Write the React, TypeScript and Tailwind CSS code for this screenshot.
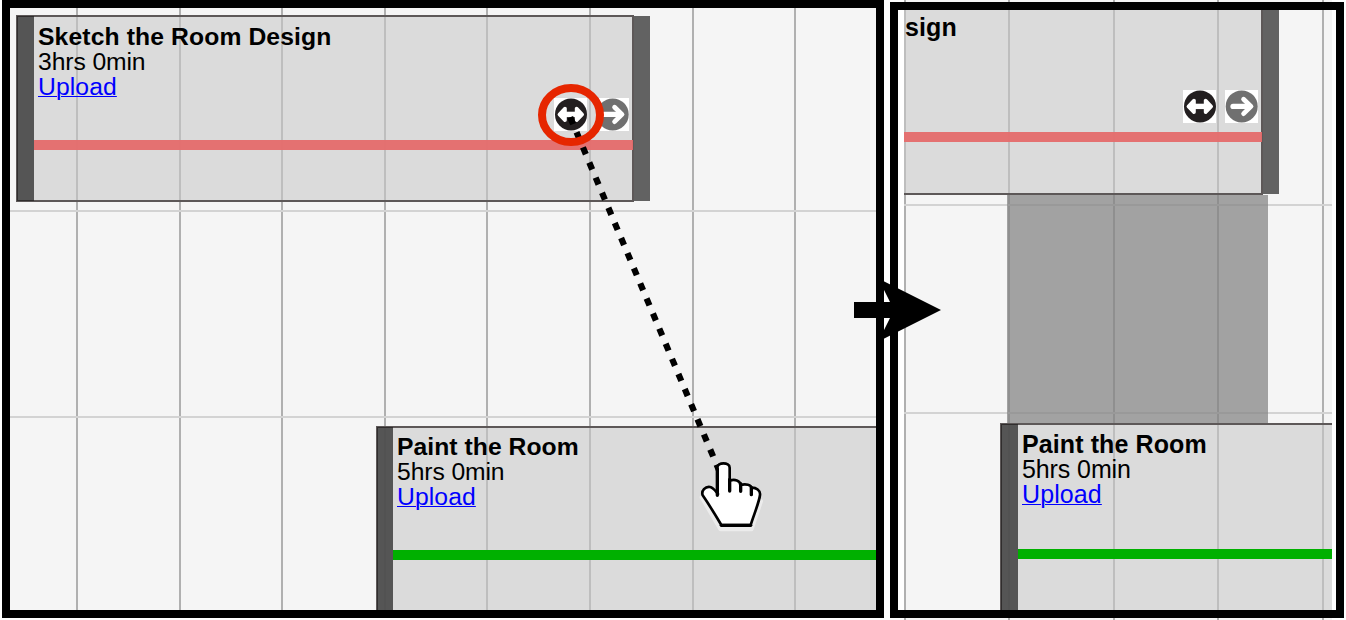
import type { ReactNode } from "react";

type IconProps = { className?: string };

function CollaborateIcon({ className = "" }: IconProps) {
  return (
    <svg viewBox="0 0 33 33" className={`h-[33px] w-[33px] bg-white ${className}`}>
      <circle cx="17" cy="16.4" r="16" fill="#231f20" />
      <g fill="#fff" stroke="#fff" strokeLinejoin="round" strokeWidth="3.6">
        <path d="M5.4 16.4L11 10.6V22.2Z" />
        <path d="M28.2 16.4L22.6 10.6V22.2Z" />
        <path d="M10 16.4H24" strokeWidth="5.4" />
      </g>
    </svg>
  );
}

function HandoffIcon({ className = "" }: IconProps) {
  return (
    <svg viewBox="0 0 33 33" className={`h-[33px] w-[33px] bg-white ${className}`}>
      <circle cx="16.7" cy="16.4" r="16" fill="#707070" />
      <g fill="none" stroke="#fff" strokeLinecap="round" strokeLinejoin="round">
        <path d="M8 16.4H24" strokeWidth="5.2" />
        <path d="M18.6 9.2L26 16.4L18.6 23.6" strokeWidth="4.8" />
      </g>
    </svg>
  );
}

function GridLines({ columns, rows }: { columns: string[]; rows: string[] }) {
  return (
    <>
      <div className="absolute inset-0 flex">
        {columns.map((width, i) => (
          <div key={i} className={`h-full shrink-0 border-r-2 border-[#b0b0b0] ${width}`} />
        ))}
      </div>
      <div className="absolute inset-0 flex flex-col">
        {rows.map((height, i) => (
          <div key={i} className={`w-full shrink-0 border-b-2 border-[#d3d3d3] ${height}`} />
        ))}
      </div>
    </>
  );
}

type TaskProps = {
  title: string;
  duration?: string;
  place: string;
  handleWidth?: string;
  barPlace: string;
  barColor: string;
  textClass: string;
  titleClass: string;
  children?: ReactNode;
};

function Task({
  title,
  duration,
  place,
  handleWidth = "w-[17px]",
  barPlace,
  barColor,
  textClass,
  titleClass,
  children,
}: TaskProps) {
  return (
    <div className={`absolute flex ${place}`}>
      <div className="relative flex flex-1 border-2 border-[#5d5858] bg-[rgba(200,200,200,0.59)] bg-clip-padding">
        <div
          className={`-my-px -ml-px shrink-0 border-y border-l border-[#302d2d] bg-[rgba(70,70,70,0.9)] ${handleWidth}`}
        />
        <div className={`whitespace-nowrap leading-[25px] text-black ${textClass}`}>
          <div className={`font-bold ${titleClass}`}>{title}</div>
          {duration && (
            <>
              <div className="tracking-[-0.1px]">{duration}</div>
              <a href="#" className="tracking-[0.1px] text-[#0000ff] underline decoration-1">
                Upload
              </a>
            </>
          )}
        </div>
        <div className={`absolute -right-px h-[10px] ${barPlace} ${barColor}`} />
        {children}
      </div>
      <div className="my-px -ml-px w-[17px] shrink-0 border-l border-[#2b2929] bg-[#626262]" />
    </div>
  );
}

export default function App() {
  return (
    <div className="relative flex h-[620px] w-[1346px] overflow-hidden bg-white pl-[2px] font-['Liberation_Sans',Arial,sans-serif]">
      <section className="relative h-[618px] w-[882px] shrink-0 overflow-hidden border-8 border-black bg-[#f5f5f5]">
        <GridLines
          columns={["w-[68px]", "w-[103px]", "w-[102px]", "w-[103px]", "w-[102px]", "w-[103px]", "w-[103px]", "w-[102px]"]}
          rows={["h-[204px]", "h-[206px]"]}
        />
        <Task
          title="Sketch the Room Design"
          duration="3hrs 0min"
          place="left-[6px] top-[7px] h-[187px] w-[634px]"
          barPlace="left-[16px] top-[123px]"
          barColor="bg-[rgba(229,107,107,0.95)]"
          textClass="pl-1 pt-[7px] text-[24.7px]"
          titleClass="tracking-[0.12px]"
        >
          <div className="absolute right-[3px] top-[81px] flex gap-[9px]">
            <CollaborateIcon />
            <HandoffIcon />
          </div>
        </Task>
        <Task
          title="Paint the Room"
          duration="5hrs 0min"
          place="left-[366px] top-[418px] h-[230px] w-[900px]"
          handleWidth="w-[16px]"
          barPlace="left-[15px] top-[122px]"
          barColor="bg-[#00b000]"
          textClass="pl-1 pt-[6px] text-[24.7px]"
          titleClass="tracking-[0.05px]"
        />
      </section>

      <section className="relative ml-[20px] h-[620px] w-[428px] shrink-0 overflow-hidden bg-[#f5f5f5]">
        <GridLines
          columns={["w-[2px]", "w-[104px]", "w-[105px]", "w-[104px]", "w-[105px]"]}
          rows={["h-[206px]", "h-[208px]"]}
        />
        <div className="absolute left-[103px] top-[195px] h-[229px] w-[261px] bg-[rgba(130,130,130,0.72)]" />
        <Task
          title="sign"
          place="-left-[20px] top-[5px] h-[190px] w-[395px]"
          barPlace="left-[16px] top-[125px]"
          barColor="bg-[rgba(229,107,107,0.95)]"
          textClass="pl-[3px] pt-[8px] text-[25px]"
          titleClass="tracking-[0.1px]"
        >
          <div className="absolute right-[3px] top-[83px] flex gap-[9px]">
            <CollaborateIcon />
            <HandoffIcon />
          </div>
        </Task>
        <Task
          title="Paint the Room"
          duration="5hrs 0min"
          place="left-[96px] top-[423px] h-[192px] w-[900px]"
          barPlace="left-[16px] top-[124px]"
          barColor="bg-[#00b000]"
          textClass="pl-1 pt-[7px] text-[25px]"
          titleClass="tracking-[0.1px]"
        />
      </section>
      <div className="absolute left-[890px] top-[2px] h-[616px] w-[454px] border-8 border-black" />

      <svg viewBox="0 0 1346 620" className="pointer-events-none absolute left-0 top-0 h-[620px] w-[1346px]">
        <path d="M570.2 117.2L719.5 471.5" stroke="#000" strokeWidth="6.2" strokeDasharray="7.5 8.89" />
        <ellipse cx="571" cy="115" rx="29" ry="27" fill="none" stroke="#e62600" strokeWidth="8" />
        <path d="M854 302H890L878.3 278.6L941 310L878.3 341.4L890 318H854Z" />
        <g transform="translate(680 450) scale(.33333)" strokeLinejoin="round" strokeLinecap="round">
          <path d="M66 142L122 237H214L242 154" fill="none" stroke="#ececec" strokeWidth="14" />
          <path
            d="M112 128V53C112 36 149 36 149 53V92C164 87 181 91 181 105C198 100 214 105 214 113C228 112 242 121 240 135C238 155 222 193 212 225H124C108 198 88 165 68 136C63 122 76 109 90 111C101 113 107 124 114 132Z"
            fill="#fff"
            stroke="#000"
            strokeWidth="8"
          />
          <path d="M112 56V136M149 88V123M182 101V124M214 112V134" fill="none" stroke="#000" strokeWidth="10" />
          <path d="M124 226H212" stroke="#000" strokeWidth="10" />
        </g>
      </svg>
    </div>
  );
}
